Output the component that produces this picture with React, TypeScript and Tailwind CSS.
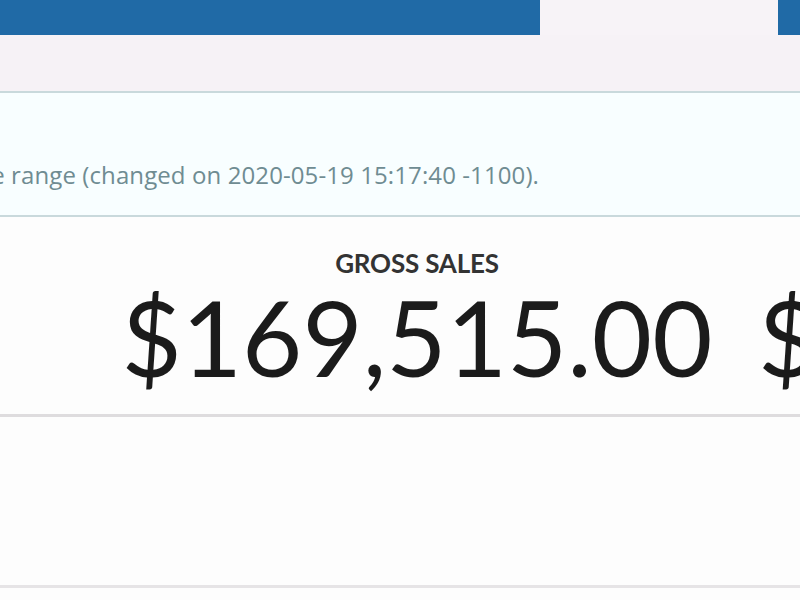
export default function App() {
  return (
    <div className="w-[800px] h-[600px] overflow-hidden bg-[#fdfdfd] font-['Lato',sans-serif]">
      {/* top nav */}
      <div className="flex h-[35px]">
        <div className="w-[540px] bg-[#206aa6]" />
        <div className="flex-1 bg-[#f7f3f7]" />
        <div className="w-[22px] bg-[#206aa6]" />
      </div>
      <div className="h-[56px] bg-[#f6f2f6]" />

      {/* notice */}
      <div className="h-[126px] border-y-2 border-[#c9d9dc] bg-[#f8feff] overflow-hidden">
        <div className="mt-[67px] flex w-[539px] justify-end">
          <p className="shrink-0 whitespace-nowrap font-['Open_Sans',sans-serif] text-[24px] leading-[30px] tracking-[0.1px] text-[#6f8c92]">
            the date range (changed on 2020-05-19 15:17:40 -1100).
          </p>
        </div>
      </div>

      {/* stats */}
      <div className="flex h-[197px] overflow-hidden">
        <div className="ml-[87px] flex w-[660px] shrink-0 flex-col items-center pt-[31px]">
          <div className="text-[26px] font-bold leading-[30px] tracking-[-0.2px] text-[#333333]">GROSS SALES</div>
          <div className="mt-[4px] text-[104px] leading-[110px] text-[#1b1b1b]">$169,515.00</div>
        </div>
        <div className="ml-[11px] flex shrink-0 flex-col pt-[65px]">
          <div className="text-[104px] leading-[110px] text-[#1b1b1b]">$</div>
        </div>
      </div>
      <div className="h-[3px] bg-[#dedcde]" />
      <div className="h-[168px]" />
      <div className="h-[3px] bg-[#e6e4e6]" />
    </div>
  )
}
